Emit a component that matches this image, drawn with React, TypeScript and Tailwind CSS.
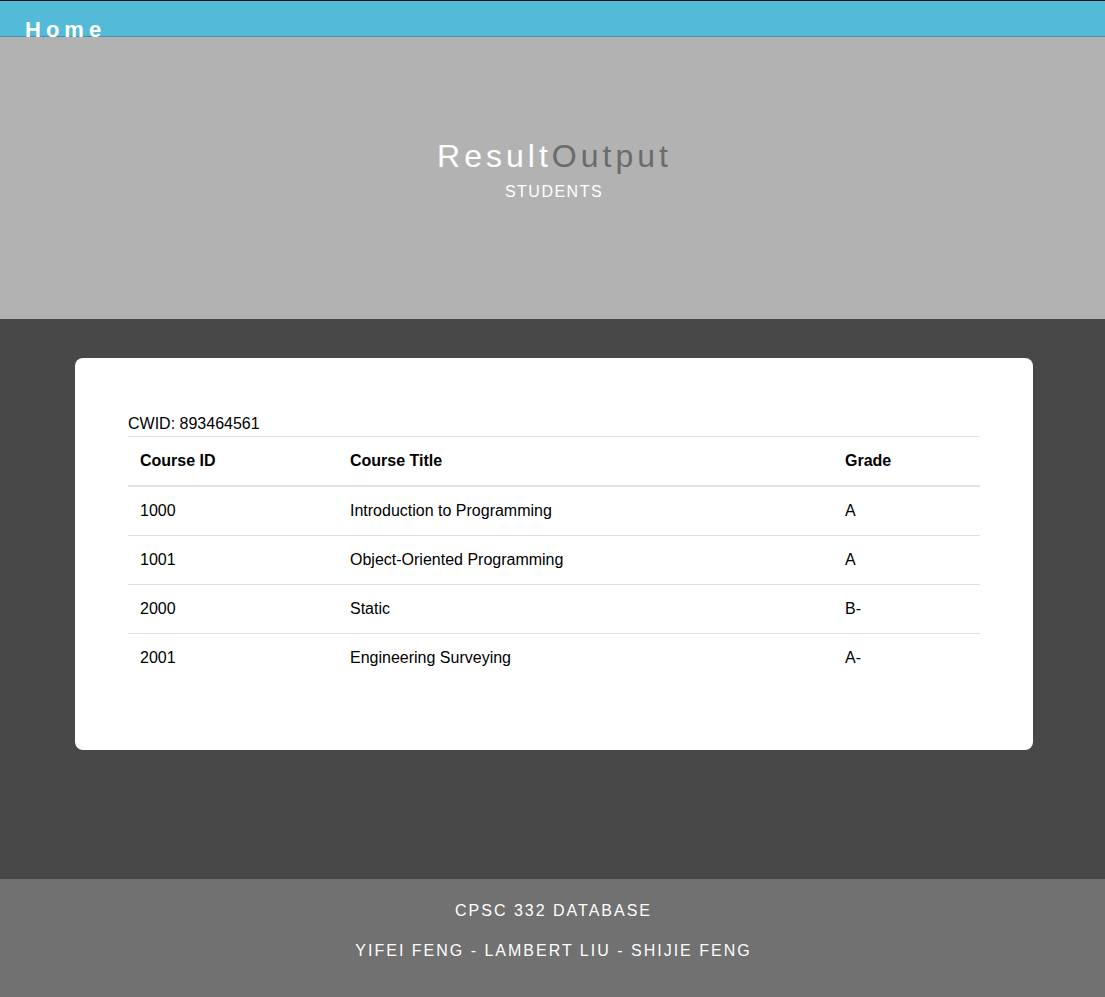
const courses = [
  { id: "1000", title: "Introduction to Programming", grade: "A" },
  { id: "1001", title: "Object-Oriented Programming", grade: "A" },
  { id: "2000", title: "Static", grade: "B-" },
  { id: "2001", title: "Engineering Surveying", grade: "A-" },
]

export default function App() {
  return (
    <div className="min-h-[997px] flex flex-col font-['Liberation_Sans',Arial,sans-serif] text-black">
      <nav className="h-[37px] bg-[#53bbd8] border-t border-t-[#111] border-b border-b-[#3f93aa] relative">
        <a className="absolute left-[25px] top-[14px] text-[22px] leading-[30px] font-bold tracking-[5px] text-white">Home</a>
      </nav>

      <header className="h-[282px] bg-[#b2b2b2] flex flex-col items-center pt-[100px]">
        <h1 className="text-[32px] leading-[38px] tracking-[4px] font-normal pl-[4px]">
          <span className="text-white">Result</span>
          <span className="text-[#6b6b6b]">Output</span>
        </h1>
        <p className="text-[16px] leading-[20px] tracking-[1.5px] text-white mt-[7px] pl-[3px]">STUDENTS</p>
      </header>

      <main className="h-[560px] bg-[#484848] pt-[39px] pl-[75px] pr-[72px]">
        <div className="bg-white rounded-[8px] px-[53px] pt-[54px] pb-[52px]">
          <div className="text-[16px] leading-[24px]">CWID: 893464561</div>
          <table className="w-full text-[16px] leading-[24px] border-collapse mb-[16px] table-fixed">
            <colgroup>
              <col className="w-[210px]" />
              <col className="w-[495px]" />
              <col />
            </colgroup>
            <thead>
              <tr className="border-t border-[#dee2e6] border-b-2 border-b-[#dee2e6]">
                <th className="text-left font-bold p-[12px]">Course ID</th>
                <th className="text-left font-bold p-[12px]">Course Title</th>
                <th className="text-left font-bold p-[12px]">Grade</th>
              </tr>
            </thead>
            <tbody>
              {courses.map((c, i) => (
                <tr key={c.id} className={i > 0 ? "border-t border-[#dee2e6]" : ""}>
                  <td className="p-[12px]">{c.id}</td>
                  <td className="p-[12px]">{c.title}</td>
                  <td className="p-[12px]">{c.grade}</td>
                </tr>
              ))}
            </tbody>
          </table>
        </div>
      </main>

      <footer className="flex-1 bg-[#717171] flex flex-col items-center pt-[22px] pb-[27px] text-white text-[16px] tracking-[2px] leading-[20px]">
        <p className="pl-[2px]">CPSC 332 DATABASE</p>
        <p className="mt-[20px] pl-[2px]">YIFEI FENG - LAMBERT LIU - SHIJIE FENG</p>
      </footer>
    </div>
  )
}
